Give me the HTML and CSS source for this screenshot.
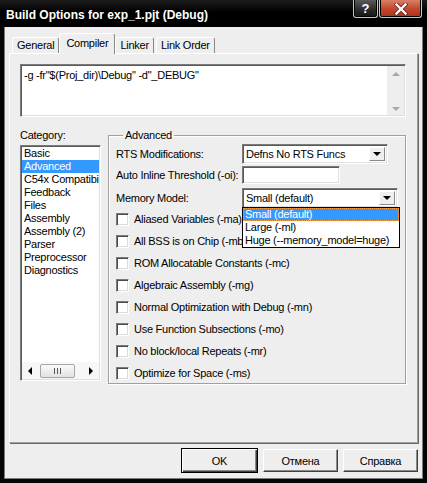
FILE: index.html
```html
<!DOCTYPE html>
<html lang="ru">

<head>
    <meta charset="utf-8">
    <meta name="viewport" content="width=device-width, initial-scale=1.0">
    <title>Build Options for exp_1.pjt (Debug)</title>
    <link rel="stylesheet" href="styles.css">
</head>

<body>
    <div class="window">
        <!-- Titellinje -->
        <div class="titlebar">
            <span class="title">Build Options for exp_1.pjt (Debug)</span>
            <div class="title-buttons">
                <span class="tb help">?</span>
                <span class="tb close">
                    <svg width="14" height="12" viewBox="0 0 14 12">
                        <path d="M2.5 1.5 L11.5 10.5 M11.5 1.5 L2.5 10.5" stroke="#6b2315" stroke-width="4" stroke-linecap="square" fill="none" />
                        <path d="M2.5 1.5 L11.5 10.5 M11.5 1.5 L2.5 10.5" stroke="#fff" stroke-width="2.4" stroke-linecap="square" fill="none" />
                    </svg>
                </span>
            </div>
        </div>

        <div class="client">
            <!-- Faner -->
            <div class="tabs">
                <span class="tab">General</span>
                <span class="tab selected">Compiler</span>
                <span class="tab">Linker</span>
                <span class="tab">Link Order</span>
            </div>

            <div class="panel">
                <div class="cmd">
                    <div class="cmd-text">-g -fr"$(Proj_dir)\Debug" -d"_DEBUG"</div>
                    <div class="vscroll">
                        <span class="arrow-up"></span>
                        <span class="arrow-down"></span>
                    </div>
                </div>

                <div class="lower">
                    <div class="category">
                        <div class="cat-label">Category:</div>
                        <div class="listbox">
                            <ul>
                                <li>Basic</li>
                                <li class="chosen">Advanced</li>
                                <li>C54x Compatibility</li>
                                <li>Feedback</li>
                                <li>Files</li>
                                <li>Assembly</li>
                                <li>Assembly (2)</li>
                                <li>Parser</li>
                                <li>Preprocessor</li>
                                <li>Diagnostics</li>
                            </ul>
                            <div class="hscroll">
                                <span class="sb-btn"><span class="arrow-left"></span></span>
                                <span class="track"><span class="thumb"><span class="grip"></span></span></span>
                                <span class="sb-btn"><span class="arrow-right"></span></span>
                            </div>
                        </div>
                    </div>

                    <fieldset class="group">
                        <legend>Advanced</legend>

                        <div class="row row-first">
                            <span class="row-label">RTS Modifications:</span>
                            <div class="combo combo-short">
                                <span class="combo-text">Defns No RTS Funcs</span>
                                <span class="dropbtn"><span class="arrow-down-black"></span></span>
                            </div>
                        </div>

                        <div class="row row-edit">
                            <span class="row-label">Auto Inline Threshold (-oi):</span>
                            <div class="edit"></div>
                        </div>

                        <div class="row row-third">
                            <span class="row-label">Memory Model:</span>
                            <div class="combo combo-wide">
                                <span class="combo-text">Small (default)</span>
                                <span class="dropbtn"><span class="arrow-down-black"></span></span>
                                <!-- Åben rulleliste -->
                                <ul class="dropdown">
                                    <li class="chosen">Small (default)</li>
                                    <li>Large (-ml)</li>
                                    <li>Huge (--memory_model=huge)</li>
                                </ul>
                            </div>
                        </div>

                        <div class="check"><span class="box"></span>Aliased Variables (-ma)</div>
                        <div class="check"><span class="box"></span>All BSS is on Chip (-mb)</div>
                        <div class="check"><span class="box"></span>ROM Allocatable Constants (-mc)</div>
                        <div class="check"><span class="box"></span>Algebraic Assembly (-mg)</div>
                        <div class="check"><span class="box"></span>Normal Optimization with Debug (-mn)</div>
                        <div class="check"><span class="box"></span>Use Function Subsections (-mo)</div>
                        <div class="check"><span class="box"></span>No block/local Repeats (-mr)</div>
                        <div class="check"><span class="box"></span>Optimize for Space (-ms)</div>
                    </fieldset>
                </div>
            </div>

            <!-- Knapper -->
            <div class="buttons">
                <button class="btn default">OK</button>
                <button class="btn">Отмена</button>
                <button class="btn">Справка</button>
            </div>
        </div>
    </div>
</body></html>
```

FILE: styles.css
```css
* {
    box-sizing: border-box;
}

body {
    margin: 0;
    font-family: "Liberation Sans", Arial, sans-serif;
    font-size: 11px;
    letter-spacing: -0.25px;
    color: #000;
    background: #000;
}

.window {
    width: 427px;
    height: 483px;
    background: #050505;
    display: flex;
    flex-direction: column;
}

/* Titellinje */
.titlebar {
    height: 27px;
    display: flex;
    justify-content: space-between;
    align-items: flex-start;
    background: linear-gradient(#1c1c1c, #000 45%);
}

.title {
    color: #fff;
    font-weight: bold;
    font-size: 12px;
    letter-spacing: 0;
    line-height: 14px;
    padding: 8px 0 0 6px;
}

.title-buttons {
    display: flex;
    gap: 1px;
    padding-right: 5px;
}

.tb {
    height: 18px;
    display: flex;
    align-items: center;
    justify-content: center;
    border: 1px solid #c9c9c9;
    border-top: none;
    border-radius: 0 0 3px 3px;
    box-shadow: inset 0 -1px 0 #000, inset 1px 0 0 #000, inset -1px 0 0 #000;
}

.help {
    width: 25px;
    color: #fff;
    font-weight: bold;
    font-size: 13px;
    letter-spacing: 0;
    background: linear-gradient(#5a5a5a, #2a2a2a 60%, #151515);
}

.close {
    width: 43px;
    background: linear-gradient(#d8806b, #c4492d 50%, #a8321a);
}

/* Klientområde */
.client {
    flex: 1;
    margin: 0 4px 4px 4px;
    background: #eeeeee;
    border: 1px solid #7c7c7c;
    border-top: none;
    padding: 6px 4px 0 4px;
    display: flex;
    flex-direction: column;
}

.tabs {
    height: 20px;
    display: flex;
    align-items: flex-end;
    gap: 2px;
    padding-left: 3px;
}

.tab {
    height: 16px;
    line-height: 15px;
    padding: 0 4px;
    background: #eeeeee;
    border: 1px solid;
    border-bottom: none;
    border-color: #fff #8a8a8a #fff #fff;
    border-radius: 3px 3px 0 0;
}

.tab.selected {
    height: 21px;
    padding: 2px 6px 0 6px;
    margin: 0 -2px -1px -2px;
    position: relative;
    z-index: 1;
}

.panel {
    height: 390px;
    border: 1px solid;
    border-color: #fff #a0a0a0 #a0a0a0 #fff;
    box-shadow: 1px 1px 0 #6a6a6a;
    padding: 10px 0 0 10px;
}

/* Kommandolinje */
.cmd {
    width: 386px;
    height: 53px;
    display: flex;
    background: #fff;
    border: 1px solid;
    border-color: #7a7a7a #fff #fff #7a7a7a;
    box-shadow: inset 1px 1px 0 #5a5a5a, inset -1px -1px 0 #e0e0e0;
    padding: 1px;
}

.cmd-text {
    flex: 1;
    padding: 3px 2px;
    line-height: 13px;
}

.vscroll {
    width: 17px;
    background: #eeeeee;
    display: flex;
    flex-direction: column;
    justify-content: space-between;
    align-items: center;
    padding: 6px 0 4px 0;
}

.arrow-up {
    border-left: 4px solid transparent;
    border-right: 4px solid transparent;
    border-bottom: 4px solid #a8a8a8;
}

.arrow-down {
    border-left: 4px solid transparent;
    border-right: 4px solid transparent;
    border-top: 4px solid #a8a8a8;
}

.lower {
    display: flex;
    gap: 7px;
    margin-top: 12px;
}

/* Kategori-liste */
.category {
    width: 81px;
}

.cat-label {
    line-height: 13px;
    margin-bottom: 3px;
}

.listbox {
    height: 236px;
    background: #fff;
    border: 1px solid;
    border-color: #7a7a7a #fff #fff #7a7a7a;
    box-shadow: inset 1px 1px 0 #5a5a5a, inset -1px -1px 0 #e0e0e0;
    padding: 1px;
    display: flex;
    flex-direction: column;
}

.listbox ul {
    flex: 1;
    list-style: none;
    margin: 0;
    padding: 0;
    overflow: hidden;
}

.listbox li {
    line-height: 13px;
    padding-left: 2px;
    white-space: nowrap;
    overflow: hidden;
}

.chosen {
    background: #3399ff;
    color: #fff;
}

.hscroll {
    height: 17px;
    display: flex;
    align-items: center;
    background: #f7f7f7;
}

.sb-btn {
    width: 16px;
    height: 17px;
    display: flex;
    align-items: center;
    justify-content: center;
}

.arrow-left {
    border-top: 4px solid transparent;
    border-bottom: 4px solid transparent;
    border-right: 4px solid #000;
}

.arrow-right {
    border-top: 4px solid transparent;
    border-bottom: 4px solid transparent;
    border-left: 4px solid #000;
}

.track {
    flex: 1;
    height: 17px;
    display: flex;
    align-items: center;
    padding-left: 2px;
}

.thumb {
    width: 35px;
    height: 14px;
    border: 1px solid #a5a5a5;
    border-radius: 2px;
    background: linear-gradient(#fafafa, #e2e2e2);
    display: flex;
    align-items: center;
    justify-content: center;
}

.grip {
    width: 7px;
    height: 6px;
    background: repeating-linear-gradient(90deg, #555 0 1px, transparent 1px 3px);
}

/* Gruppeboks */
.group {
    width: 298px;
    height: 255px;
    margin: 0;
    padding: 2px 0 0 7px;
    border: 1px solid #a0a0a0;
    box-shadow: inset 1px 1px 0 #fff, 1px 1px 0 #fff;
}

.group legend {
    padding: 0 2px;
    margin-left: 7px;
    line-height: 13px;
}

.row {
    display: flex;
    align-items: center;
}

.row-first {
    height: 20px;
}

.row-edit {
    height: 18px;
    margin-top: 2px;
}

.row-third {
    height: 20px;
    margin-top: 4px;
}

.row-label {
    width: 126px;
    white-space: nowrap;
}

.combo {
    height: 20px;
    display: flex;
    background: #fff;
    border: 1px solid;
    border-color: #7a7a7a #fff #fff #7a7a7a;
    box-shadow: inset 1px 1px 0 #5a5a5a, inset -1px -1px 0 #e0e0e0;
    padding: 2px;
    position: relative;
}

.combo-short {
    width: 146px;
}

.combo-wide {
    width: 156px;
}

.combo-text {
    flex: 1;
    padding-left: 1px;
    line-height: 14px;
}

.dropbtn {
    width: 16px;
    background: #eeeeee;
    border: 1px solid;
    border-color: #fff #8a8a8a #8a8a8a #fff;
    display: flex;
    align-items: center;
    justify-content: center;
}

.arrow-down-black {
    border-left: 4px solid transparent;
    border-right: 4px solid transparent;
    border-top: 4px solid #000;
}

.edit {
    width: 98px;
    height: 18px;
    background: #fff;
    border: 1px solid;
    border-color: #7a7a7a #fff #fff #7a7a7a;
    box-shadow: inset 1px 1px 0 #5a5a5a, inset -1px -1px 0 #e0e0e0;
}

.dropdown {
    position: absolute;
    top: 100%;
    left: -1px;
    width: 158px;
    margin: 0;
    padding: 0;
    list-style: none;
    background: #fff;
    border: 1px solid #000;
    z-index: 2;
}

.dropdown li {
    line-height: 13px;
    padding-left: 2px;
    white-space: nowrap;
}

.dropdown .chosen {
    outline: 1px dotted #ff9a3c;
    outline-offset: -1px;
}

/* Afkrydsningsfelter */
.check {
    height: 22px;
    display: flex;
    align-items: center;
    gap: 5px;
    white-space: nowrap;
}

.box {
    width: 13px;
    height: 13px;
    background: #fff;
    border: 1px solid;
    border-color: #7a7a7a #fff #fff #7a7a7a;
    box-shadow: inset 1px 1px 0 #4a4a4a, inset -1px -1px 0 #dcdcdc;
}

/* Knapper */
.buttons {
    height: 25px;
    margin-top: 5px;
    display: flex;
    justify-content: flex-end;
    align-items: center;
    gap: 5px;
}

.btn {
    width: 75px;
    height: 23px;
    padding: 0;
    font-family: "Liberation Sans", Arial, sans-serif;
    font-size: 11px;
    letter-spacing: -0.25px;
    color: #000;
    background: #eeeeee;
    border: 1px solid;
    border-color: #fff #404040 #404040 #fff;
    box-shadow: inset -1px -1px 0 #8a8a8a;
}

.btn.default {
    width: 77px;
    height: 25px;
    border: 1px solid #000;
    box-shadow: inset 1px 1px 0 #fff, inset -1px -1px 0 #404040, inset -2px -2px 0 #8a8a8a;
}
```
